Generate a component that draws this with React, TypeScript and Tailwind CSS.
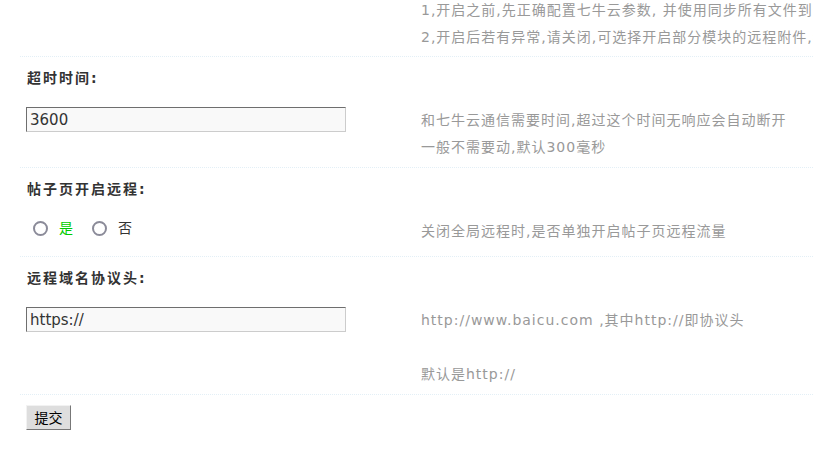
import React from 'react';

const tip =
  "text-[14px] leading-[27px] text-[#999] tracking-[1px] whitespace-nowrap";
const label =
  "pl-[7px] h-[27px] leading-[27px] text-[14px] font-bold tracking-[2px] text-[#333]";
const row = "border-b border-dotted border-[#e3eff6]";
const field =
  "w-[320px] h-[25px] bg-[#f9f9f9] border border-t-[#6e6e6e] border-l-[#6e6e6e] border-r-[#cccccc] border-b-[#cccccc] pl-[3px] text-[15px] text-[#333] outline-none font-[family-name:'DejaVu_Sans',sans-serif]";

const Radio: React.FC<{ text: string; color: string }> = ({ text, color }) => (
  <label className="flex items-center">
    <span className="w-[15px] h-[15px] rounded-full border-2 border-[#8b8b99] bg-white" />
    <span className={`ml-[11px] text-[14px] ${color}`}>{text}</span>
  </label>
);

const App: React.FC = () => {
  return (
    <div className="w-[813px] h-[450px] overflow-hidden bg-white pl-[20px] font-[family-name:'DejaVu_Sans','Noto_Sans_CJK_SC',sans-serif]">
      {/* remote notes (scrolled above) */}
      <div className={`${row} flex -mt-[3px] pb-[5px]`}>
        <div className="w-[401px] shrink-0" />
        <div className={tip}>
          1,开启之前,先正确配置七牛云参数, 并使用同步所有文件到七牛云
          <br />
          2,开启后若有异常,请关闭,可选择开启部分模块的远程附件,看是否正常
        </div>
      </div>

      {/* timeout */}
      <div className={`${row} pt-[8px] pb-[6px]`}>
        <div className={label}>超时时间:</div>
        <div className="flex mt-[15px]">
          <div className="w-[401px] shrink-0 pl-[6px]">
            <input className={field} defaultValue="3600" />
          </div>
          <div className={tip}>
            和七牛云通信需要时间,超过这个时间无响应会自动断开
            <br />
            一般不需要动,默认300毫秒
          </div>
        </div>
      </div>

      {/* thread page remote */}
      <div className={`${row} pt-[8px] pb-[11px]`}>
        <div className={label}>帖子页开启远程:</div>
        <div className="flex mt-[15px]">
          <div className="w-[401px] shrink-0 pl-[13px] h-[20px] flex items-center gap-[19px]">
            <Radio text="是" color="text-[#00cc00]" />
            <Radio text="否" color="text-[#333]" />
          </div>
          <div className={tip}>关闭全局远程时,是否单独开启帖子页远程流量</div>
        </div>
      </div>

      {/* protocol */}
      <div className={`${row} pt-[8px] pb-[6px]`}>
        <div className={label}>远程域名协议头:</div>
        <div className="flex mt-[15px]">
          <div className="w-[401px] shrink-0 pl-[6px]">
            <input className={field} defaultValue="https://" />
          </div>
          <div className={tip}>
            http://www.baicu.com ,其中http://即协议头
            <br />
            <br />
            默认是http://
          </div>
        </div>
      </div>

      <div className="pl-[6px] mt-[10px]">
        <button className="w-[45px] h-[25px] bg-[#dedede] border border-t-[#f2f2f2] border-l-[#f2f2f2] border-r-[#777] border-b-[#777] text-[14px] text-black leading-none">
          提交
        </button>
      </div>
    </div>
  );
};

export default App;
